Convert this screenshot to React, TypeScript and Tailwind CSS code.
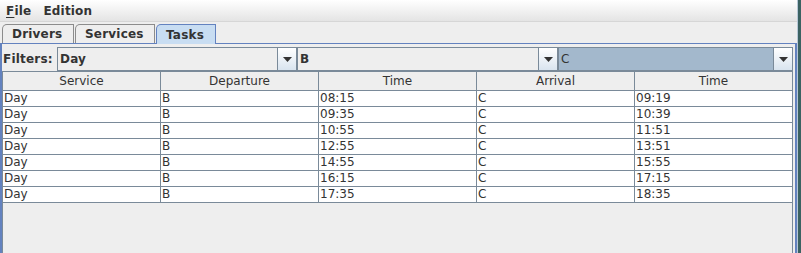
import React from 'react'

const rows = [
  ['Day', 'B', '08:15', 'C', '09:19'],
  ['Day', 'B', '09:35', 'C', '10:39'],
  ['Day', 'B', '10:55', 'C', '11:51'],
  ['Day', 'B', '12:55', 'C', '13:51'],
  ['Day', 'B', '14:55', 'C', '15:55'],
  ['Day', 'B', '16:15', 'C', '17:15'],
  ['Day', 'B', '17:35', 'C', '18:35'],
]

const headers = ['Service', 'Departure', 'Time', 'Arrival', 'Time']

function Arrow() {
  return (
    <div className="w-[20px] h-full shrink-0 border border-[#7a8a99] bg-gradient-to-b from-white to-[#d9e4ef] flex items-center justify-center">
      <svg width="9" height="5" viewBox="0 0 9 5">
        <polygon points="0,0 9,0 4.5,5" fill="#333" />
      </svg>
    </div>
  )
}

function Combo({ value, width, focused }: { value: string; width: string; focused?: boolean }) {
  return (
    <div className={`${width} h-[24px] flex`}>
      <div
        className={`flex-1 h-full border border-[#7a8a99] border-r-0 flex items-center pl-[2px] text-[12px] text-[#333] ${
          focused ? 'bg-[#a3b8cc] font-normal' : 'bg-[#eeeeee] font-bold tracking-[0.2px]'
        }`}
      >
        {value}
      </div>
      <Arrow />
    </div>
  )
}

function Tab({ label, width, selected }: { label: string; width: string; selected?: boolean }) {
  return (
    <div
      className={`${width} flex items-center pl-[9px] font-bold text-[12px] tracking-[0.2px] text-[#333] rounded-tl-[5px] border border-b-0 ${
        selected
          ? 'h-[20px] bg-[#c8ddf2] border-[#6382bf] -mb-px relative z-10'
          : 'h-[19px] bg-[#eeeeee] border-[#8c8c8c]'
      }`}
    >
      {label}
    </div>
  )
}

export default function App() {
  return (
    <div className="w-[801px] h-[253px] bg-[#eeeeee] flex overflow-hidden font-['DejaVu_Sans',sans-serif]">
      <div className="w-[797px] flex flex-col shrink-0">
        {/* menu bar */}
        <div className="h-[22px] bg-gradient-to-b from-white to-[#e4e4e4] border-b border-[#d6d6d6] flex items-center gap-[12px] pl-[6px] font-bold text-[12px] tracking-[0.2px] text-[#333]">
          <span>
            <span className="underline underline-offset-2">F</span>ile
          </span>
          <span>Edition</span>
        </div>

        {/* tabs */}
        <div className="h-[21px] flex items-end pl-[2px] gap-[1px]">
          <Tab label="Drivers" width="w-[72px]" />
          <Tab label="Services" width="w-[80px]" />
          <Tab label="Tasks" width="w-[60px]" selected />
        </div>

        {/* content */}
        <div className="flex-1 border-t border-x-2 border-[#6382bf] flex flex-col">
          <div className="flex pt-[3px]">
            <div className="w-[55px] h-[24px] flex items-center pl-[1px] font-bold text-[12px] tracking-[0.2px] text-[#333]">
              Filters:
            </div>
            <Combo value="Day" width="w-[240px]" />
            <Combo value="B" width="w-[261px]" />
            <Combo value="C" width="w-[235px]" focused />
          </div>

          <div className="w-[791px] flex-1 border-l border-r border-[#7a8a99] flex flex-col">
            <div className="flex h-[20px] border-t border-b border-[#7a8a99] bg-[#eeeeee]">
              {headers.map((h, i) => (
                <div
                  key={i}
                  className={`h-full flex items-center justify-center text-[12px] text-[#333] ${
                    i < 4 ? 'w-[158px] border-r border-[#7a8a99]' : 'flex-1'
                  }`}
                >
                  {h}
                </div>
              ))}
            </div>
            {rows.map((r, ri) => (
              <div key={ri} className="flex h-[16px] border-b border-[#7a8a99] bg-white">
                {r.map((c, ci) => (
                  <div
                    key={ci}
                    className={`h-full flex items-center pl-[1px] text-[12px] leading-[15px] text-[#333] ${
                      ci < 4 ? 'w-[158px] border-r border-[#7a8a99]' : 'flex-1'
                    }`}
                  >
                    {c}
                  </div>
                ))}
              </div>
            ))}
          </div>
        </div>
      </div>
      <div className="w-[1px] bg-[#b8c8d8]" />
      <div className="flex-1 bg-[#3b6262]" />
    </div>
  )
}
